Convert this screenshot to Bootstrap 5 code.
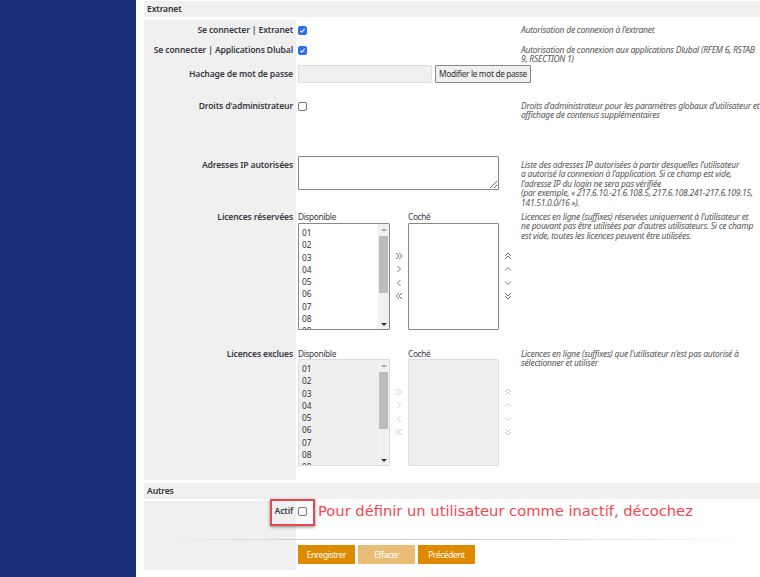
<!DOCTYPE html>
<html lang="fr"><head><meta charset="utf-8"><title>Utilisateur</title>
<link rel="stylesheet" href="https://cdn.jsdelivr.net/npm/bootstrap@5.3.0/dist/css/bootstrap.min.css">
<style>
html,body{height:577px;overflow:hidden}
body{font-family:"Noto Sans","Liberation Sans",sans-serif;font-size:8.3px;letter-spacing:-.35px;line-height:10px;color:#3a3a44;background:#fff}
.side{width:136px;background:#1b2f7b;flex:none}
.main{width:616px;margin-left:8px;padding-top:1px;flex:none}
.sec{height:16px;background:#f0f0f0;padding:3px 3px 0;font-weight:600;color:#333;font-size:8.6px;letter-spacing:-.15px}
.frow{display:flex}
.lab{width:152px;flex:none;background:#f0f0f0;text-align:right;padding-right:3px;font-weight:600;font-size:8.6px;letter-spacing:-.15px}
.val{width:225px;flex:none;padding-left:2px}
.help{flex:1;font-style:italic;color:#555;font-size:8.5px;letter-spacing:-.24px;line-height:9.4px;white-space:nowrap}
.chk{appearance:none;width:9px;height:9px;margin:0;display:block;flex:none;border:1px solid #777;border-radius:2px;background:#fff}
.chk:checked{background:#2f6fed;border-color:#2f6fed;background-image:url("data:image/svg+xml,%3Csvg xmlns='http://www.w3.org/2000/svg' viewBox='0 0 10 10'%3E%3Cpath d='M2 5.5l2 2 4-5' fill='none' stroke='%23fff' stroke-width='1.6'/%3E%3C/svg%3E")}
.r1{height:20px}.r1 .lab,.r1 .help{padding-top:5px}.r1 .val{padding-top:6px}
.r3{height:30px}.r3 .lab{padding-top:9px}.r3 .val{padding-top:5px}
.r4{height:60px}.r4 .lab,.r4 .help{padding-top:11px}.r4 .val{padding-top:12px}
.r5{height:55px}.r5 .lab,.r5 .help{padding-top:10px}.r5 .val{padding-top:6px}
.r6{height:136px}.r7{height:139px}
.r6 .lab,.r6 .val,.r6 .help,.r7 .val{padding-top:7px}
.r7 .lab,.r7 .help{padding-top:8px}
.r7 .cap{padding-top:1px}
.pw{width:134px;height:18px;background:#f0f0f0;border:1px solid #ddd;border-radius:1px;flex:none}
.pwbtn{height:18px;width:96px;flex:none;font-size:8.3px;letter-spacing:-.35px;line-height:10px;padding:0;background:#efefef;border:1px solid #888;border-radius:1px;color:#333;margin-left:3px;white-space:nowrap}
.ta{display:block;width:201px;height:34px;border:1px solid #888;border-radius:1px}
.col-a{width:92px;flex:none}.col-b{width:91px;flex:none}
.cap{height:11px}
.lst{height:107px;border:1px solid #888;border-radius:1px;overflow:hidden;background:#fff}
.col-a .lst{display:flex}
.lst.off{background:#efefef;border-color:#ddd}
.opts{flex:1;padding:3px 3px 0;overflow:hidden;line-height:12.3px;color:#333;letter-spacing:0}
.bar{width:11px;background:#f1f1f1;position:relative;display:flex;flex-direction:column;align-items:center;justify-content:space-between;padding:4px 0 3px}
.thumb{position:absolute;left:1px;right:1px;top:12px;height:57px;background:#bcbcbc}
.tri{width:0;height:0;border-left:3px solid transparent;border-right:3px solid transparent}
.tu{border-bottom:3px solid #aaa}.td{border-top:3px solid #333}
.move{width:18px;flex:none;display:flex;flex-direction:column;align-items:center;gap:5.4px;padding-top:40px}
.move svg{display:block;width:8px;height:8px;fill:none;stroke:#666;stroke-width:.9}
.off-c svg{stroke:#c8c8c8}
.after{margin-top:3px}
.foot{margin-top:2px}
.actif{height:38px}.actif .lab{padding-top:5px}.actif .val{padding-top:6px}
.callout{position:absolute;left:270px;top:499px;width:45px;height:27px;border:2px solid #e8474f;box-shadow:0 1px 3px #888}
.note{font-family:"DejaVu Sans",sans-serif;font-size:14.7px;letter-spacing:0;line-height:20px;color:#f8454f;white-space:nowrap;margin-left:11px;margin-top:-6px}
.rule{height:1px;background:linear-gradient(90deg,#f0f0f0 3%,#cfcfd9 24%,#cfcfd9 55%,#fff 100%)}
.btnrow{height:30px}.btnrow .val{padding-top:5px;display:flex;gap:3px}
.ob{width:57px;height:19px;background:#dd8a00;color:#fff;font-size:8.3px;letter-spacing:-.35px;line-height:10px;padding:0;border:0;border-radius:0}
.ob:disabled{background:#eabd76;opacity:1;color:#fff}
</style></head><body>
<svg width="0" height="0" class="position-absolute">
<symbol id="dr" viewBox="0 0 8 8"><path d="M1 1l3 3-3 3M4 1l3 3-3 3"/></symbol>
<symbol id="r" viewBox="0 0 8 8"><path d="M2.5 1l3 3-3 3"/></symbol>
<symbol id="l" viewBox="0 0 8 8"><path d="M5.5 1l-3 3 3 3"/></symbol>
<symbol id="dl" viewBox="0 0 8 8"><path d="M4 1L1 4l3 3M7 1L4 4l3 3"/></symbol>
<symbol id="du" viewBox="0 0 8 8"><path d="M1 4l3-3 3 3M1 7l3-3 3 3"/></symbol>
<symbol id="u" viewBox="0 0 8 8"><path d="M1 5.5l3-3 3 3"/></symbol>
<symbol id="d" viewBox="0 0 8 8"><path d="M1 2.5l3 3 3-3"/></symbol>
<symbol id="dd" viewBox="0 0 8 8"><path d="M1 1l3 3 3-3M1 4l3 3 3-3"/></symbol>
</svg>
<div class="d-flex" style="height:577px">
<div class="side"></div>
<div class="main">
<div class="sec">Extranet</div>
<div class="after">
<div class="frow r1"><div class="lab">Se connecter | Extranet</div><div class="val"><input class="chk" type="checkbox" checked></div><div class="help">Autorisation de connexion à l'extranet</div></div>
<div class="frow r1"><div class="lab">Se connecter | Applications Dlubal</div><div class="val"><input class="chk" type="checkbox" checked></div><div class="help">Autorisation de connexion aux applications Dlubal (RFEM 6, RSTAB<br>9, RSECTION 1)</div></div>
<div class="frow r3"><div class="lab">Hachage de mot de passe</div><div class="val d-flex"><input class="pw" disabled><button class="pwbtn" type="button">Modifier le mot de passe</button></div><div class="help"></div></div>
<div class="frow r4"><div class="lab">Droits d'administrateur</div><div class="val"><input class="chk" type="checkbox"></div><div class="help">Droits d'administrateur pour les paramètres globaux d'utilisateur et<br>affichage de contenus supplémentaires</div></div>
<div class="frow r5"><div class="lab">Adresses IP autorisées</div><div class="val"><textarea class="ta"></textarea></div><div class="help">Liste des adresses IP autorisées à partir desquelles l'utilisateur<br>a autorisé la connexion à l'application. Si ce champ est vide,<br>l'adresse IP du login ne sera pas vérifiée<br>(par exemple, « 217.6.10.-21.6.108.5, 217.6.108.241-217.6.109.15,<br>141.51.0.0/16 »).</div></div>
<div class="frow r6"><div class="lab">Licences réservées</div><div class="val d-flex">
<div class="col-a"><div class="cap">Disponible</div><div class="lst"><div class="opts">01<br>02<br>03<br>04<br>05<br>06<br>07<br>08<br>09</div><div class="bar"><span class="tri tu"></span><span class="thumb"></span><span class="tri td"></span></div></div></div>
<div class="move"><svg><use href="#dr"/></svg><svg><use href="#r"/></svg><svg><use href="#l"/></svg><svg><use href="#dl"/></svg></div>
<div class="col-b"><div class="cap">Coché</div><div class="lst"></div></div>
<div class="move"><svg><use href="#du"/></svg><svg><use href="#u"/></svg><svg><use href="#d"/></svg><svg><use href="#dd"/></svg></div>
</div><div class="help">Licences en ligne (suffixes) réservées uniquement à l'utilisateur et<br>ne pouvant pas être utilisées par d'autres utilisateurs. Si ce champ<br>est vide, toutes les licences peuvent être utilisées.</div></div>
<div class="frow r7"><div class="lab">Licences exclues</div><div class="val d-flex">
<div class="col-a"><div class="cap">Disponible</div><div class="lst off"><div class="opts">01<br>02<br>03<br>04<br>05<br>06<br>07<br>08<br>09</div><div class="bar"><span class="tri tu"></span><span class="thumb"></span><span class="tri td"></span></div></div></div>
<div class="move off-c"><svg><use href="#dr"/></svg><svg><use href="#r"/></svg><svg><use href="#l"/></svg><svg><use href="#dl"/></svg></div>
<div class="col-b"><div class="cap">Coché</div><div class="lst off"></div></div>
<div class="move off-c"><svg><use href="#du"/></svg><svg><use href="#u"/></svg><svg><use href="#d"/></svg><svg><use href="#dd"/></svg></div>
</div><div class="help">Licences en ligne (suffixes) que l'utilisateur n'est pas autorisé à<br>sélectionner et utiliser</div></div>
</div>
<div class="sec after">Autres</div>
<div class="foot">
<div class="frow actif"><div class="lab">Actif</div><div class="val d-flex"><input class="chk" type="checkbox"><div class="note">Pour définir un utilisateur comme inactif, décochez</div></div></div>
<div class="rule"></div>
<div class="frow btnrow"><div class="lab"></div><div class="val"><button class="ob" type="button">Enregistrer</button><button class="ob" type="button" disabled>Effacer</button><button class="ob" type="button">Précédent</button></div></div>
</div>
</div>
</div>
<div class="callout"></div>
</body></html>
